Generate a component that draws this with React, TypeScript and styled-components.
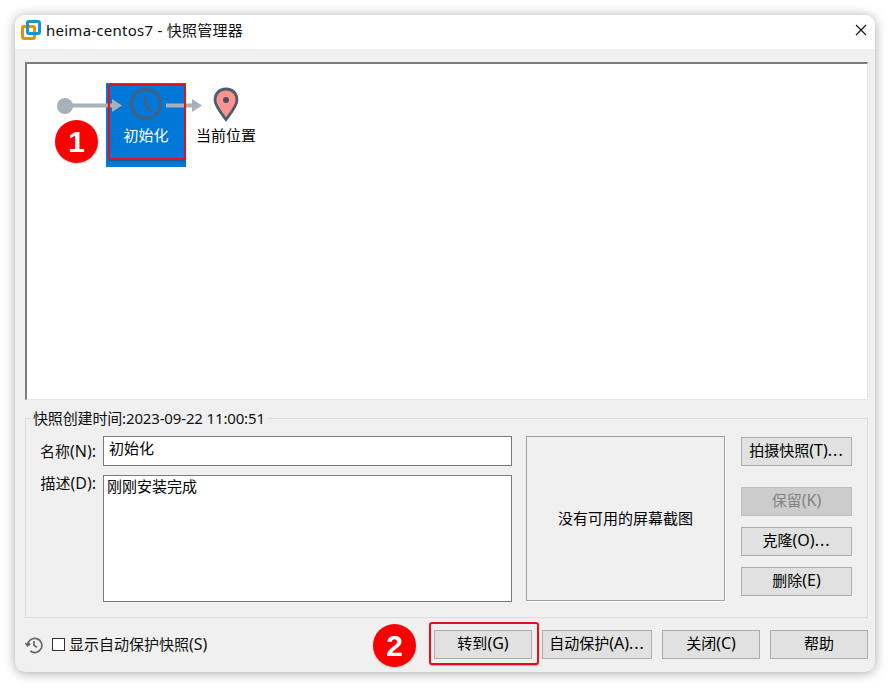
import React from "react";
import styled, { createGlobalStyle } from "styled-components";

const Global = createGlobalStyle`
  html, body { margin: 0; padding: 0; background: #fff; }
  body { font-family: "Noto Sans", "Noto Sans CJK SC", sans-serif; font-size: 15px; color: #000; }
`;
const Page = styled.div`
  width: 890px; height: 689px; padding: 15px; box-sizing: border-box; position: relative; overflow: hidden;
`;
const Win = styled.div`
  width: 860px; height: 657px; border-radius: 10px; background: #f0f0f0; overflow: hidden;
  box-shadow: 0 1px 12px rgba(0,0,0,.35);
  display: flex; flex-direction: column;
`;
const TitleBar = styled.div`
  height: 34px; box-sizing: border-box; background: #fff; display: flex; align-items: center; padding: 0 7px 4px 6px; gap: 5px; flex: none;
`;
const TitleText = styled.span`
  flex: 1; font-size: 15px; line-height: 30px; color: #111; letter-spacing: .25px;
`;
const Close = styled.button`
  border: 0; background: none; padding: 0; width: 12px; height: 12px; margin-right: 1px; display: flex;
`;
const Body = styled.div`
  flex: 1; padding: 13px 7px 14px 10px; display: flex; flex-direction: column;
`;
const Canvas = styled.div`
  height: 338px; flex: none; background: #fff; box-sizing: border-box; position: relative;
  border-top: 2px solid #7d7d7d; border-left: 2px solid #7d7d7d; border-right: 1px solid #e4e4e4; border-bottom: 1px solid #e4e4e4;
`;
const Flow = styled.svg`
  position: absolute; left: -2px; top: -2px; z-index: 1;
`;
const Node = styled.div<{ $x: number; $w: number; $h: number; $sel?: boolean }>`
  position: absolute; left: ${p => p.$x}px; top: 19px; width: ${p => p.$w}px; height: ${p => p.$h}px;
  background: ${p => (p.$sel ? "#0078d7" : "transparent")};
  color: ${p => (p.$sel ? "#fff" : "#000")};
  font-size: 15px; text-align: center; padding-top: 41px; box-sizing: border-box; line-height: 22px;
`;
const Group = styled.fieldset`
  margin: 9px 0 0; height: 209px; box-sizing: border-box; border: 1px solid #dcdcdc; padding: 9px 15px 0 5px; flex: none;
  min-width: 0; display: grid; grid-template-columns: 72px 409px 199px 127px; grid-template-rows: 30px 127px; row-gap: 9px;
`;
const Legend = styled.legend`
  margin-left: 0; padding: 0 3px 0 2px; font-size: 15px; line-height: 18px; letter-spacing: -.15px; color: #111;
`;
const Lbl = styled.label<{ $lh: number }>`
  text-align: right; padding-right: 7px; line-height: ${p => p.$lh}px; font-size: 15px; color: #111;
`;
const NameBox = styled.div`
  border: 1px solid #7a7a7a; background: #fff; box-sizing: border-box; padding: 0 5px; line-height: 22px; font-size: 15px;
`;
const DescBox = styled.div`
  border: 1px solid #7a7a7a; background: #fff; box-sizing: border-box; padding: 0 3px; line-height: 20px; font-size: 15px;
`;
const Shot = styled.div`
  grid-column: 3; grid-row: 1 / span 2; margin-left: 14px; width: 199px; height: 165px; box-sizing: border-box;
  border: 1px solid #a0a0a0; display: flex; align-items: center; justify-content: center; font-size: 15px;
  padding-bottom: 2px; box-shadow: 1px 1px 0 #fff;
`;
const Side = styled.div`
  grid-column: 4; grid-row: 1 / span 2; margin-left: 30px; display: flex; flex-direction: column; width: 111px; padding-top: 1px;
`;
const Btn = styled.button<{ $w?: number; $top?: number; $off?: boolean }>`
  width: ${p => (p.$w ? p.$w + "px" : "100%")}; height: 29px; flex: none; box-sizing: border-box; padding: 0 0 2px;
  margin-top: ${p => p.$top ?? 0}px;
  background: ${p => (p.$off ? "#cccccc" : "#e1e1e1")};
  border: 1px solid ${p => (p.$off ? "#bfbfbf" : "#adadad")};
  color: ${p => (p.$off ? "#838383" : "#000")};
  font-family: inherit; font-size: 15px; line-height: 25px; white-space: nowrap;
`;
const Hot = styled.span`
  font-size: 16px;
`;
const Dots = styled.span`
  font-size: 16px; letter-spacing: 1px;
`;
const Footer = styled.div`
  margin-top: 12px; display: flex; align-items: center; gap: 10px;
`;
const History = styled.svg`
  flex: none; margin-right: -1px;
`;
const Check = styled.span`
  width: 13px; height: 13px; box-sizing: border-box; border: 1px solid #333; background: #fff; flex: none;
`;
const CheckLabel = styled.span`
  flex: 1; margin-left: -6px; padding-bottom: 2px; font-size: 15px; color: #111; line-height: 26px;
`;
const Badge = styled.div<{ $x: number; $y: number }>`
  position: absolute; left: ${p => p.$x}px; top: ${p => p.$y}px; width: 43px; height: 43px; border-radius: 50%;
  background: #fb0000; color: #fff; display: flex; align-items: center; justify-content: center;
  font-family: "Liberation Sans", sans-serif; font-weight: 700; font-size: 30px; line-height: 43px; z-index: 3;
  box-shadow: 0 1px 2px rgba(0,0,0,.2);
`;
const Mark = styled.div<{ $x: number; $y: number; $w: number; $h: number }>`
  position: absolute; left: ${p => p.$x}px; top: ${p => p.$y}px; width: ${p => p.$w}px; height: ${p => p.$h}px;
  box-sizing: border-box; border: 2px solid #e6101c; border-radius: 3px; z-index: 2; box-shadow: 0 1px 1px rgba(60,30,30,.35);
`;

export default function App() {
  return (
    <Page>
      <Global />
      <Win>
        <TitleBar>
          <svg width="20" height="20" viewBox="0 0 20 20">
            <rect x="1.5" y="6.5" width="12" height="12" rx="1.5" fill="#fff" stroke="#f28c00" strokeWidth="3" />
            <rect x="6.5" y="1.5" width="12" height="12" rx="1.5" fill="none" stroke="#1a94d0" strokeWidth="3" />
          </svg>
          <TitleText>heima-centos7 - 快照管理器</TitleText>
          <Close aria-label="关闭">
            <svg width="12" height="12" viewBox="0 0 12 12"><path d="M1 1 L11 11 M11 1 L1 11" stroke="#111" strokeWidth="1.1" fill="none" /></svg>
          </Close>
        </TitleBar>
        <Body>
          <Canvas>
            <Node $x={79} $w={80} $h={84} $sel>初始化</Node>
            <Node $x={169} $w={60} $h={60}>当前位置</Node>
            <Flow width="300" height="120" viewBox="25 62 300 120">
              <circle cx="65" cy="106" r="8" fill="#a8b0b8" />
              <path d="M65 105.5 H113" stroke="#a8b0b8" strokeWidth="4" />
              <path d="M112 99 L122 105.5 L112 112 Z" fill="#a8b0b8" />
              <circle cx="146" cy="104" r="14.5" fill="none" stroke="#45607c" strokeWidth="3" />
              <path d="M145.5 95 V106 L151 111" fill="none" stroke="#45607c" strokeWidth="2.6" />
              <path d="M166 105.5 H194" stroke="#a8b0b8" strokeWidth="4" />
              <path d="M192 99 L202 105.5 L192 112 Z" fill="#a8b0b8" />
              <path d="M226 89 C219 89 215 94 215 100 C215 106 222 114 226 119.5 C230 114 237 106 237 100 C237 94 233 89 226 89 Z" fill="#fb9490" stroke="#4f5b68" strokeWidth="2.8" />
              <circle cx="226" cy="100" r="3" fill="#46505c" />
            </Flow>
          </Canvas>
          <Group>
            <Legend>快照创建时间:2023-09-22 11:00:51</Legend>
            <Lbl $lh={30}>名称<Hot>(N):</Hot></Lbl>
            <NameBox>初始化</NameBox>
            <Shot>没有可用的屏幕截图</Shot>
            <Side>
              <Btn>拍摄快照<Hot>(T)</Hot><Dots>...</Dots></Btn>
              <Btn $top={21} $off>保留<Hot>(K)</Hot></Btn>
              <Btn $top={11}>克隆<Hot>(O)</Hot><Dots>...</Dots></Btn>
              <Btn $top={11}>删除<Hot>(E)</Hot></Btn>
            </Side>
            <Lbl $lh={16}>描述<Hot>(D):</Hot></Lbl>
            <DescBox>刚刚安装完成</DescBox>
          </Group>
          <Footer>
            <History width="18" height="18" viewBox="0 0 24 24" fill="none" stroke="#666" strokeWidth="2.2">
              <path d="M3.5 12 A9.5 9.5 0 1 1 7 20" />
              <path d="M0.5 9.5 L3.5 13 L7 10" />
              <path d="M12 6.5 V12.5 L16 15" />
            </History>
            <Check />
            <CheckLabel>显示自动保护快照<Hot>(S)</Hot></CheckLabel>
            <Btn $w={98}>转到<Hot>(G)</Hot></Btn>
            <Btn $w={110}>自动保护<Hot>(A)</Hot><Dots>...</Dots></Btn>
            <Btn $w={98}>关闭<Hot>(C)</Hot></Btn>
            <Btn $w={98}>帮助</Btn>
          </Footer>
        </Body>
      </Win>
      <Mark $x={108} $y={84} $w={78} $h={76} />
      <Mark $x={429} $y={622} $w={110} $h={43} />
      <Badge $x={55} $y={120}>1</Badge>
      <Badge $x={373} $y={624}>2</Badge>
    </Page>
  );
}
